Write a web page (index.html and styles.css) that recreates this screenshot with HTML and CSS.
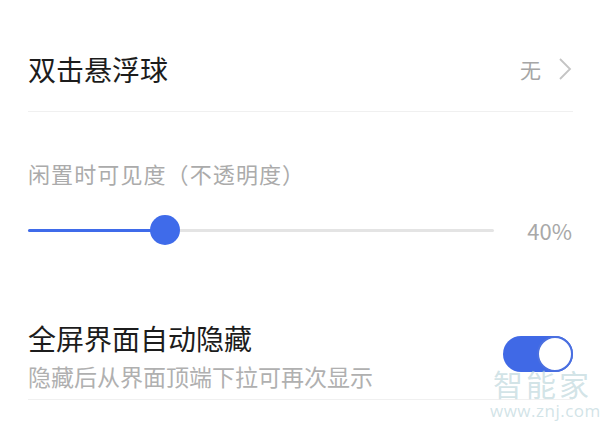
FILE: index.html
```html
<!DOCTYPE html>
<html>
<head>
<meta charset="utf-8">
<link rel="stylesheet" href="styles.css">
</head>
<body>
<div class="page">
  <div class="row nav-row">
    <div class="title">双击悬浮球</div>
    <div class="value">
      <span>无</span>
      <svg class="chev" width="16" height="24" viewBox="0 0 16 24"><path d="M3 2 L13 12 L3 22" fill="none" stroke="#c4c4c4" stroke-width="1.8"/></svg>
    </div>
  </div>
  <div class="section">
    <div class="label">闲置时可见度（不透明度）</div>
    <div class="slider-row">
      <div class="track">
        <div class="fill" style="width:137px"></div>
        <div class="thumb" style="left:137px"></div>
      </div>
      <div class="pct">40%</div>
    </div>
  </div>
  <div class="row toggle-row">
    <div class="texts">
      <div class="title">全屏界面自动隐藏</div>
      <div class="sub">隐藏后从界面顶端下拉可再次显示</div>
    </div>
    <div class="switch"><div class="knob"></div></div>
  </div>
</div>
<div class="watermark">
  <div class="wm-cn">智能家</div>
  <div class="wm-en">www.znj.com</div>
</div>
</body>
</html>
```
FILE: styles.css
```css
html, body {
  margin: 0;
  padding: 0;
  background: #ffffff;
}
body {
  width: 600px;
  height: 429px;
  overflow: hidden;
  position: relative;
  font-family: "Noto Sans CJK SC", "Noto Sans", sans-serif;
}
.page {
  padding: 0 27px 0 28px;
}
.row {
  display: flex;
  justify-content: space-between;
  border-bottom: 1px solid #f0f0f0;
}
.nav-row {
  height: 112px;
  padding-top: 26px;
  box-sizing: border-box;
  align-items: center;
}
.title {
  font-size: 28px;
  line-height: 36px;
  color: #1c1c1c;
}
.value {
  display: flex;
  align-items: center;
  gap: 16px;
  color: #a6a6a6;
  font-size: 21px;
}
.chev {
  display: block;
}
.section {
  padding-top: 46px;
}
.label {
  font-size: 22px;
  line-height: 30px;
  color: #ababab;
  letter-spacing: 1.1px;
}
.slider-row {
  display: flex;
  align-items: center;
  justify-content: space-between;
  margin-top: 26px;
  height: 32px;
}
.track {
  position: relative;
  width: 466px;
  height: 3px;
  background: #e4e4e4;
  border-radius: 2px;
}
.fill {
  height: 3px;
  background: #3f6bea;
  border-radius: 2px;
}
.thumb {
  position: absolute;
  top: 50%;
  width: 30px;
  height: 30px;
  margin: -15px 0 0 -15px;
  border-radius: 50%;
  background: #3f6bea;
}
.pct {
  font-size: 22px;
  color: #a8a8a8;
  margin-right: 1px;
}
.toggle-row {
  margin-top: 74px;
  height: 79px;
  align-items: flex-start;
}
.sub {
  font-size: 23px;
  line-height: 30px;
  color: #b0b0b0;
  margin-top: 5px;
}
.switch {
  margin-top: 16px;
  width: 70px;
  height: 36px;
  border-radius: 18px;
  background: #4069e6;
  display: flex;
  justify-content: flex-end;
  align-items: center;
}
.knob {
  width: 32px;
  height: 32px;
  border-radius: 50%;
  background: #ffffff;
  border: 2px solid #4a6fe0;
}
.watermark {
  position: absolute;
  left: 490px;
  top: 368px;
  width: 102px;
  color: rgba(185, 212, 218, 0.65);
  text-align: center;
  white-space: nowrap;
}
.wm-cn {
  font-size: 30px;
  line-height: 30px;
  letter-spacing: 3px;
  margin-right: -3px;
}
.wm-en {
  font-family: "Open Sans", sans-serif;
  font-size: 17px;
  line-height: 18px;
  letter-spacing: 0.5px;
  margin-top: 4px;
}
```
